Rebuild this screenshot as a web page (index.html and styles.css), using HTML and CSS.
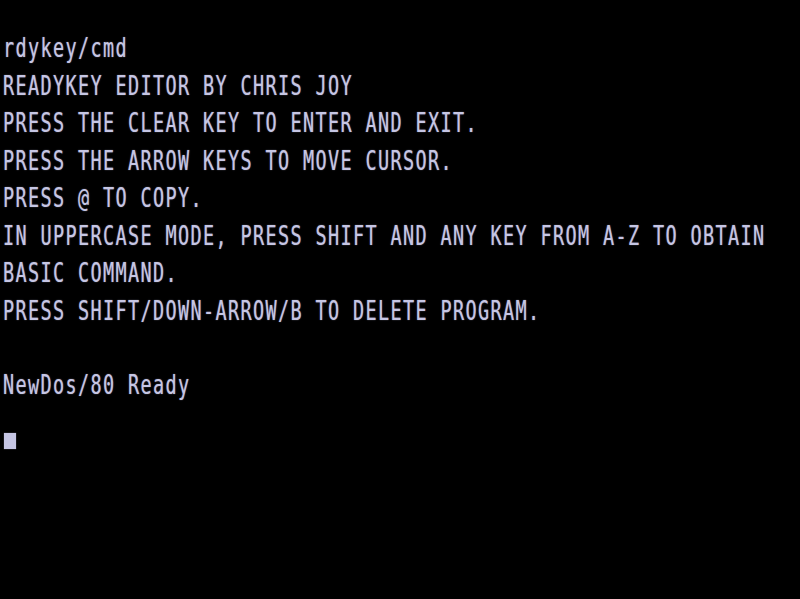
FILE: index.html
```html
<!DOCTYPE html>
<html>
<head>
<meta charset="utf-8">
<title>NewDos/80</title>
<link rel="stylesheet" href="styles.css">
</head>
<body>
<div class="screen">
  <div class="row"></div>
  <div class="row"><span class="txt">rdykey/cmd</span></div>
  <div class="row"><span class="txt">READYKEY EDITOR BY CHRIS JOY</span></div>
  <div class="row"><span class="txt">PRESS THE CLEAR KEY TO ENTER AND EXIT.</span></div>
  <div class="row"><span class="txt">PRESS THE ARROW KEYS TO MOVE CURSOR.</span></div>
  <div class="row"><span class="txt">PRESS @ TO COPY.</span></div>
  <div class="row"><span class="txt">IN UPPERCASE MODE, PRESS SHIFT AND ANY KEY FROM A-Z TO OBTAIN</span></div>
  <div class="row"><span class="txt">BASIC COMMAND.</span></div>
  <div class="row"><span class="txt">PRESS SHIFT/DOWN-ARROW/B TO DELETE PROGRAM.</span></div>
  <div class="row"></div>
  <div class="row"><span class="txt">NewDos/80 Ready</span></div>
  <div class="row cursor-row"><span class="cursor"></span></div>
</div>
</body>
</html>
```
FILE: styles.css
```css
html, body {
  margin: 0;
  padding: 0;
  background: #000;
}
.screen {
  width: 800px;
  height: 599px;
  background: #000;
  display: flex;
  flex-direction: column;
  overflow: hidden;
}
.row {
  height: 37.4375px;
  flex: 0 0 37.4375px;
  padding-left: 3px;
  box-sizing: border-box;
}
.txt {
  display: block;
  font-family: "DejaVu Sans Mono", monospace;
  font-size: 18.5px;
  line-height: 18.5px;
  letter-spacing: 1.36px;
  color: #c6c6e4;
  white-space: pre;
  transform-origin: 0 0;
  transform: translateY(-2px) scaleY(1.48);
  text-shadow: 0 0 1px rgba(200, 200, 235, 0.6);
}
.cursor-row {
  display: flex;
  align-items: flex-end;
  padding-left: 4px;
}
.cursor {
  display: block;
  width: 12px;
  height: 16px;
  background: #c6c6e4;
  box-shadow: 0 0 1px rgba(200, 200, 235, 0.6);
}
```
